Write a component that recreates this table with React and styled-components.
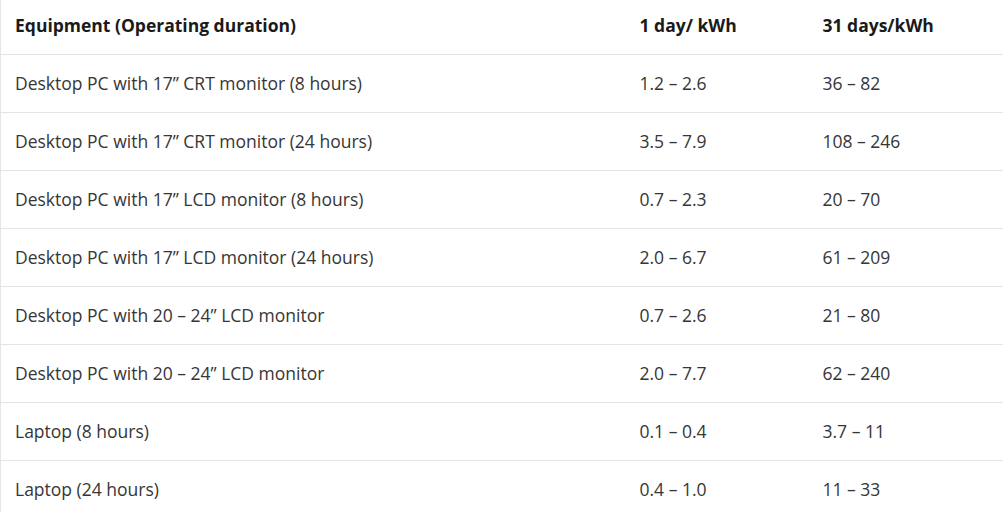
import styled, { createGlobalStyle } from "styled-components";

const GlobalStyle = createGlobalStyle`
    html, body {
        margin: 0;
        padding: 0;
        background: #fff;
    }
`;

const Table = styled.table`
    width: 1003px;
    border-collapse: collapse;
    border-left: 1px solid #e6e6e6;
    font-family: "Open Sans", "Liberation Sans", sans-serif;
    color: #363636;
`;

const HeadCell = styled.th`
    height: 54px;
    box-sizing: border-box;
    padding: 0 14px 4px;
    text-align: left;
    font-size: 17.5px;
    font-weight: 700;
    color: #1a1a1a;
    border-bottom: 1px solid #e4e4e4;
    width: ${(p) => p.$width || "auto"};
`;

const Row = styled.tr`
    height: 58px;
    & + & td {
        border-top: 1px solid #e4e4e4;
    }
`;

const Cell = styled.td`
    padding: 0 14px 1px;
    font-size: 17.5px;
    vertical-align: middle;
`;

const rows = [
    ["Desktop PC with 17\u201D CRT monitor (8 hours)", "1.2 \u2013 2.6", "36 \u2013 82"],
    ["Desktop PC with 17\u201D CRT monitor (24 hours)", "3.5 \u2013 7.9", "108 \u2013 246"],
    ["Desktop PC with 17\u201D LCD monitor (8 hours)", "0.7 \u2013 2.3", "20 \u2013 70"],
    ["Desktop PC with 17\u201D LCD monitor (24 hours)", "2.0 \u2013 6.7", "61 \u2013 209"],
    ["Desktop PC with 20 \u2013 24\u201D LCD monitor", "0.7 \u2013 2.6", "21 \u2013 80"],
    ["Desktop PC with 20 \u2013 24\u201D LCD monitor", "2.0 \u2013 7.7", "62 \u2013 240"],
    ["Laptop (8 hours)", "0.1 \u2013 0.4", "3.7 \u2013 11"],
    ["Laptop (24 hours)", "0.4 \u2013 1.0", "11 \u2013 33"],
];

const App = () => {
    return (
        <>
            <GlobalStyle />
            <Table>
                <thead>
                    <tr>
                        <HeadCell $width="625px">Equipment (Operating duration)</HeadCell>
                        <HeadCell $width="183px">1 day/ kWh</HeadCell>
                        <HeadCell>31 days/kWh</HeadCell>
                    </tr>
                </thead>
                <tbody>
                    {rows.map((r, i) => (
                        <Row key={i}>
                            {r.map((c, j) => (
                                <Cell key={j}>{c}</Cell>
                            ))}
                        </Row>
                    ))}
                </tbody>
            </Table>
        </>
    );
};

export default App;
